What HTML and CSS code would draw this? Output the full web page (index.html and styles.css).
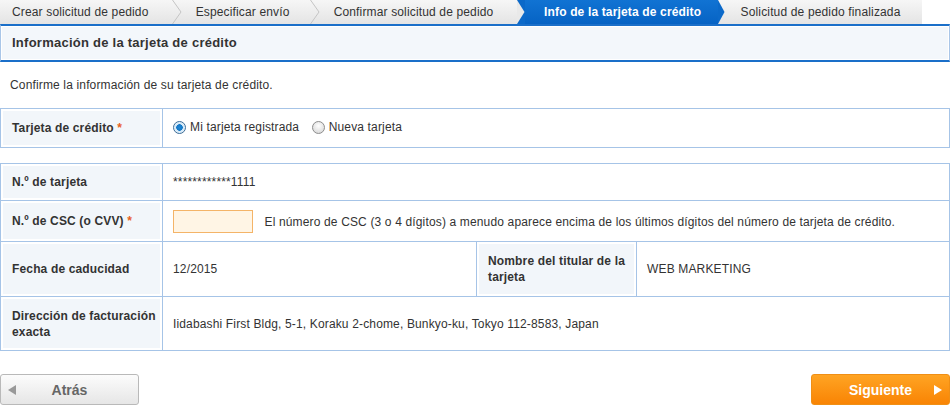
FILE: index.html
```html
<!DOCTYPE html>
<html lang="es">
<head>
  <meta charset="UTF-8">
  <title>Info de la tarjeta de crédito</title>
  <link rel="stylesheet" href="styles.css">
</head>
<body>

  <div class="steps">
    <div class="step step-1">Crear solicitud de pedido</div>
    <svg class="chev" width="10" height="24" viewBox="0 0 10 24"><polyline points="0.5,0 9,12 0.5,24" fill="none" stroke="#c4c4c4"/></svg>
    <div class="step step-2">Especificar envío</div>
    <svg class="chev" width="10" height="24" viewBox="0 0 10 24"><polyline points="0.5,0 9,12 0.5,24" fill="none" stroke="#c4c4c4"/></svg>
    <div class="step step-3">Confirmar solicitud de pedido</div>
    <svg class="chev chev-into" width="8" height="24" viewBox="0 0 8 24"><polygon points="0,0 7.5,12 0,24" fill="#e9e9e9"/></svg>
    <div class="step step-4 active">Info de la tarjeta de crédito</div>
    <svg class="chev" width="7" height="24" viewBox="0 0 7 24"><polygon points="0,0 6.5,12 0,24" fill="#0b69c9"/></svg>
    <div class="step step-5">Solicitud de pedido finalizada</div>
  </div>

  <div class="section-head">
    <h2>Información de la tarjeta de crédito</h2>
  </div>

  <p class="intro">Confirme la información de su tarjeta de crédito.</p>

  <table class="form-table choose">
    <colgroup>
      <col class="c-label">
      <col>
    </colgroup>
    <tr class="row-choose">
      <th>Tarjeta de crédito <span class="req">*</span></th>
      <td>
        <label class="radio"><span class="dot checked"></span>Mi tarjeta registrada</label>
        <label class="radio"><span class="dot"></span>Nueva tarjeta</label>
      </td>
    </tr>
  </table>

  <table class="form-table details">
    <colgroup>
      <col class="c-label">
      <col class="c-date">
      <col class="c-holder">
      <col>
    </colgroup>
    <tr class="row-number">
      <th>N.º de tarjeta</th>
      <td colspan="3">************1111</td>
    </tr>
    <tr class="row-csc">
      <th>N.º de CSC (o CVV) <span class="req">*</span></th>
      <td colspan="3">
        <input type="text" class="csc-input">
        <span class="hint">El número de CSC (3 o 4 dígitos) a menudo aparece encima de los últimos dígitos del número de tarjeta de crédito.</span>
      </td>
    </tr>
    <tr class="row-expiry">
      <th>Fecha de caducidad</th>
      <td>12/2015</td>
      <th>Nombre del titular de la tarjeta</th>
      <td>WEB MARKETING</td>
    </tr>
    <tr class="row-address">
      <th>Dirección de facturación exacta</th>
      <td colspan="3">Iidabashi First Bldg, 5-1, Koraku 2-chome, Bunkyo-ku, Tokyo 112-8583, Japan</td>
    </tr>
  </table>

  <div class="button-bar">
    <button class="back-btn"><span class="tri-left"></span>Atrás</button>
    <button class="next-btn">Siguiente<span class="tri-right"></span></button>
  </div>

</body>
</html>
```

FILE: styles.css
```css
body {
  margin: 0;
  width: 950px;
  font-family: "Liberation Sans", Arial, sans-serif;
  font-size: 12px;
  letter-spacing: 0.15px;
  color: #333;
  background-color: #fff;
}

/* step bar */
.steps {
  display: flex;
  width: 922px;
  height: 24px;
  background: linear-gradient(#f6f6f6, #e4e4e4);
}
.step {
  line-height: 24px;
  font-size: 12px;
  color: #333;
  white-space: nowrap;
  box-sizing: border-box;
}
.chev {
  display: block;
  flex: none;
}
.step-1 { width: 173px; padding-left: 12px; }
.step-2 { width: 129px; padding-left: 14px; }
.step-3 { width: 199px; padding-left: 14px; }
.step-4 { width: 194px; padding-left: 19px; }
.step-5 { width: 199px; padding-left: 16px; }
.chev-into {
  background: #0b69c9;
}
.step.active {
  background: linear-gradient(#1173d3, #0663c4);
  color: #fff;
  font-weight: bold;
}

/* section header */
.section-head {
  border-top: 2px solid #1a6fc9;
  border-bottom: 2px solid #1a6fc9;
  border-left: 1px solid #a9c6e8;
  border-right: 1px solid #a9c6e8;
  background: #f3f7fb;
  box-shadow: inset 0 0 0 1px #fff;
}
.section-head h2 {
  margin: 0;
  padding: 0 11px;
  height: 34px;
  line-height: 34px;
  font-size: 13px;
  font-weight: bold;
  letter-spacing: 0.25px;
  color: #333;
}

.intro {
  margin: 16px 0 16px 10px;
  line-height: 14px;
}

/* tables */
.form-table {
  width: 950px;
  border-collapse: collapse;
  table-layout: fixed;
}
.c-label { width: 162px; }
.c-date { width: 314px; }
.c-holder { width: 160px; }
.form-table th,
.form-table td {
  border: 1px solid #a6c4e7;
  text-align: left;
  vertical-align: middle;
  line-height: 16px;
}
.form-table th {
  padding: 0 6px 0 11px;
  background: #f2f6fa;
  box-shadow: inset 0 0 0 2px #fff;
  font-weight: bold;
  color: #333;
}
.form-table td {
  padding: 0 10px;
}
.details {
  margin-top: 15px;
}
.row-choose { height: 39px; }
.row-number { height: 37px; }
.row-csc { height: 41px; }
.row-expiry { height: 55px; }
.row-address { height: 54px; }
.req {
  color: #e8601e;
}

/* radios */
.radio {
  display: inline-flex;
  align-items: center;
  margin-right: 9px;
}
.dot {
  display: inline-block;
  width: 11px;
  height: 11px;
  margin-right: 4px;
  border: 1px solid #8e8e8e;
  border-radius: 50%;
  background: radial-gradient(circle at 50% 35%, #fff, #d2d2d2);
  position: relative;
  top: 1px;
}
.dot.checked {
  border-color: #3c6c97;
  background: radial-gradient(circle, #1d86d6 0, #1377c6 3px, #cfe6f7 3.5px, #eaf4fb 6px);
}

/* csc */
.csc-input {
  width: 80px;
  height: 23px;
  box-sizing: border-box;
  border: 1px solid #f4b468;
  background: #fff5e5;
  margin: 0 8px 0 0;
  vertical-align: middle;
}
.hint {
  vertical-align: middle;
}

/* buttons */
.button-bar {
  display: flex;
  justify-content: space-between;
  margin-top: 23px;
}
button {
  width: 139px;
  height: 31px;
  font-family: "Liberation Sans", Arial, sans-serif;
  font-size: 14px;
  font-weight: bold;
  border-radius: 3px;
  cursor: pointer;
  position: relative;
}
.back-btn {
  border: 1px solid #b9b9b9;
  background: linear-gradient(#fcfcfc, #e6e6e6);
  color: #666;
}
.next-btn {
  border: 1px solid #f08f15;
  background: linear-gradient(#ffa423, #f98404);
  color: #fff;
}
.tri-left {
  position: absolute;
  left: 7px;
  top: 10px;
  border-top: 5px solid transparent;
  border-bottom: 5px solid transparent;
  border-right: 8px solid #999;
}
.tri-right {
  position: absolute;
  right: 7px;
  top: 10px;
  border-top: 5px solid transparent;
  border-bottom: 5px solid transparent;
  border-left: 8px solid #fff;
}
```
